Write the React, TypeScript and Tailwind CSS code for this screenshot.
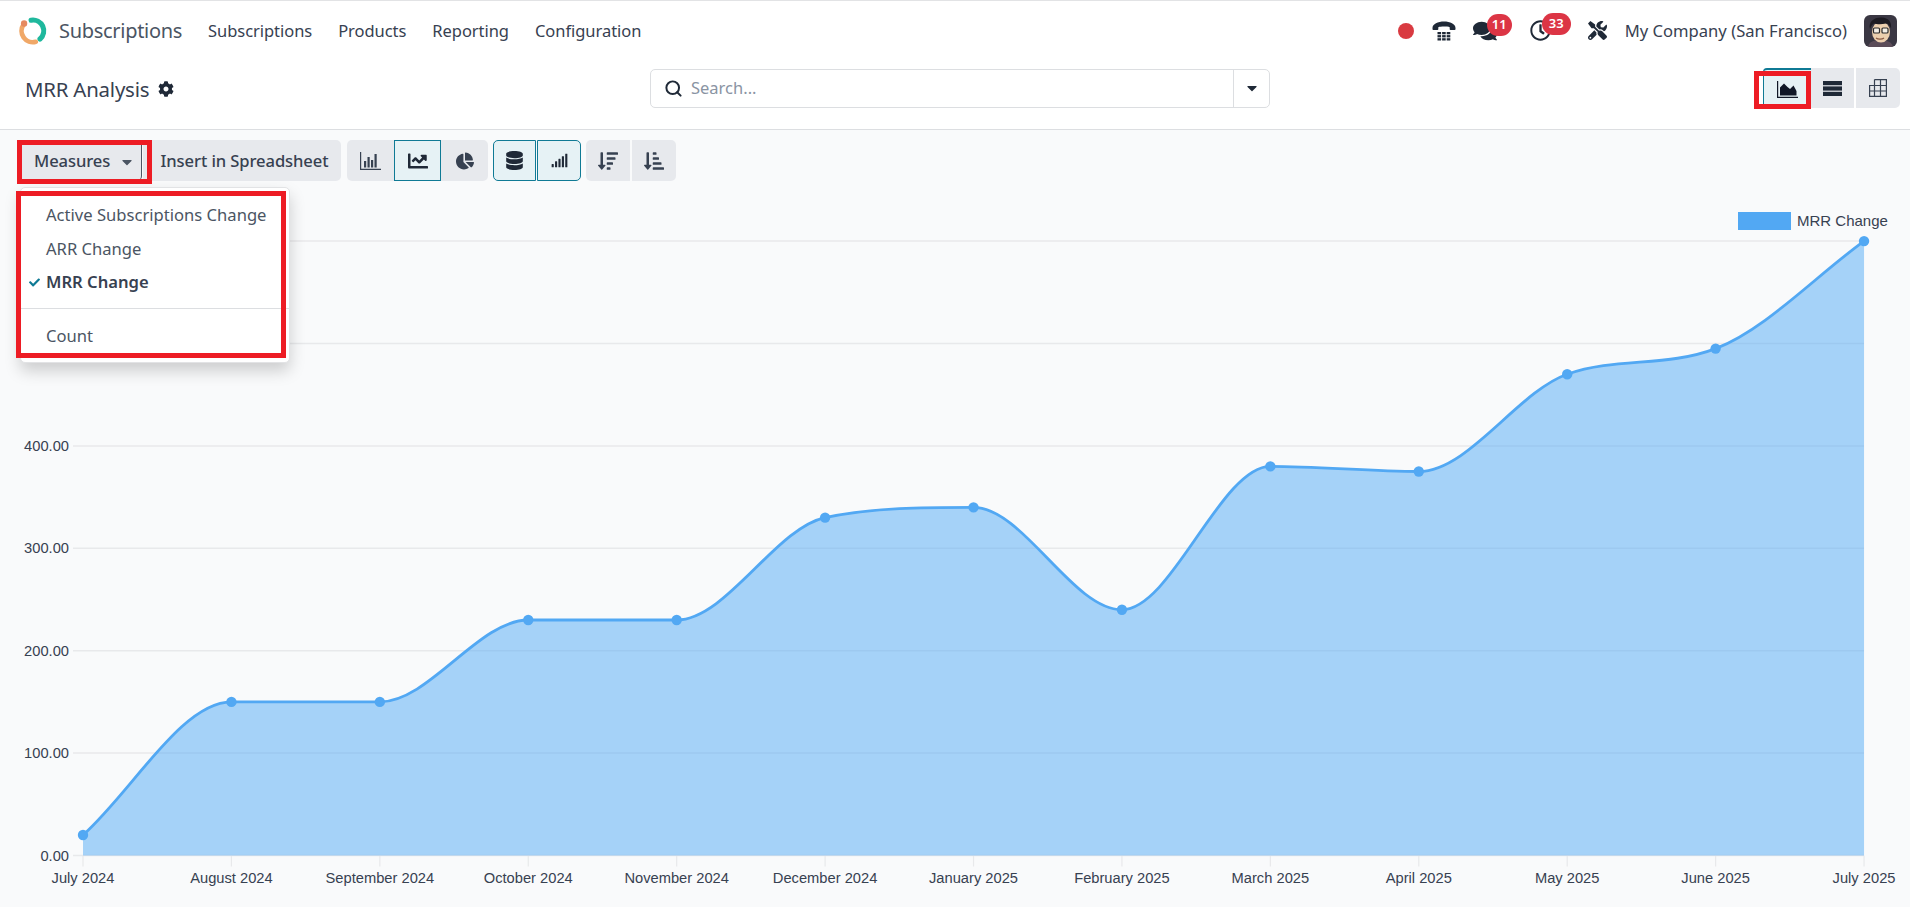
import type { ReactNode } from 'react';
import { Search } from 'lucide-react';
import {
  FaCaretDown,
  FaChartLine,
  FaChartPie,
  FaCheck,
  FaCog,
  FaComments,
  FaDatabase,
  FaRegClock,
  FaSignal,
  FaSortAmountDown,
  FaSortAmountDownAlt,
  FaTools,
} from 'react-icons/fa';

const months = [
  'July 2024',
  'August 2024',
  'September 2024',
  'October 2024',
  'November 2024',
  'December 2024',
  'January 2025',
  'February 2025',
  'March 2025',
  'April 2025',
  'May 2025',
  'June 2025',
  'July 2025',
];
const values = [20, 150, 150, 230, 230, 330, 340, 240, 380, 375, 470, 495, 600];

const X0 = 83;
const STEP = 148.42;
const BASE = 855.5;
const PER_UNIT = 1.024;

const pts = values.map((v, i) => ({ x: X0 + i * STEP, y: BASE - v * PER_UNIT }));

// same monotone interpolation the chart uses
function monotonePath(p: { x: number; y: number }[]) {
  const n = p.length;
  const delta: number[] = [];
  for (let i = 0; i < n - 1; i++) delta.push((p[i + 1].y - p[i].y) / (p[i + 1].x - p[i].x));
  const m: number[] = new Array(n).fill(0);
  m[0] = delta[0];
  m[n - 1] = delta[n - 2];
  for (let i = 1; i < n - 1; i++) {
    m[i] = Math.sign(delta[i - 1]) === Math.sign(delta[i]) ? (delta[i - 1] + delta[i]) / 2 : 0;
  }
  for (let i = 0; i < n - 1; i++) {
    if (delta[i] === 0) {
      m[i] = 0;
      m[i + 1] = 0;
      continue;
    }
    const a = m[i] / delta[i];
    const b = m[i + 1] / delta[i];
    const sq = a * a + b * b;
    if (sq > 9) {
      const tau = 3 / Math.sqrt(sq);
      m[i] = a * tau * delta[i];
      m[i + 1] = b * tau * delta[i];
    }
  }
  let d = `M${p[0].x} ${p[0].y}`;
  for (let i = 0; i < n - 1; i++) {
    const dx = (p[i + 1].x - p[i].x) / 3;
    d += ` C${p[i].x + dx} ${p[i].y + m[i] * dx} ${p[i + 1].x - dx} ${p[i + 1].y - m[i + 1] * dx} ${p[i + 1].x} ${p[i + 1].y}`;
  }
  return d;
}

function Logo() {
  return (
    <svg width="30" height="30" viewBox="0 0 32 32" fill="none" className="shrink-0">
      <path d="M14 4.500 A11.500 11.500 0 0 1 23.500 24.500" stroke="#1fb89d" strokeWidth="5.500" strokeLinecap="round" />
      <path d="M6 9 A12 12 0 0 0 19 27.500" stroke="#f0a868" strokeWidth="5" strokeLinecap="round" />
      <circle cx="6.500" cy="8" r="3.400" fill="#e58a5f" />
    </svg>
  );
}

function PhoneIcon() {
  const keys = [0, 1, 2].flatMap((row) => [0, 1, 2].map((col) => ({ row, col })));
  return (
    <svg width="24" height="20" viewBox="0 0 24 20" fill="#1f2937">
      <path d="M0.500 7C0.500 3 6 0.500 12 0.500S23.500 3 23.500 7v1.200c0 .5-.4.8-.8.8h-4.200c-.5 0-.8-.3-.8-.8V6.200C15.500 5.400 8.500 5.400 6.300 6.200v2c0 .5-.3.8-.8.8H1.300c-.4 0-.8-.3-.8-.8z" />
      {keys.map(({ row, col }) => (
        <rect key={`${row}-${col}`} x={5.500 + col * 4.600} y={11 + row * 3.100} width="3.600" height="2.300" />
      ))}
    </svg>
  );
}

function BarChartIcon() {
  return (
    <svg width="21" height="18" viewBox="0 0 21 18" fill="#374151">
      <path d="M0 0h1.200v16.700H21V18H0z" />
      <rect x="4" y="9" width="2.200" height="6.500" />
      <rect x="7.500" y="5" width="2.200" height="10.500" />
      <rect x="11" y="8" width="2.200" height="7.500" />
      <rect x="14.500" y="2" width="2.200" height="13.500" />
    </svg>
  );
}

function AreaChartIcon() {
  return (
    <svg width="21" height="17" viewBox="0 0 21 17" fill="#111827">
      <path d="M0 0h1.200v15.700H21V17H0z" />
      <path d="M3 14.500V6.500L7 2.500l3.500 3.500 2.500 2 3.500-3.500 3 5.500v4.500z" />
    </svg>
  );
}

function ListIcon() {
  return (
    <svg width="19" height="15" viewBox="0 0 19 15" fill="#1f2937">
      <rect width="19" height="4.200" />
      <rect y="5.400" width="19" height="4.200" />
      <rect y="10.800" width="19" height="4.200" />
    </svg>
  );
}

function TableIcon() {
  return (
    <svg width="18" height="18" viewBox="0 0 18 18" fill="none" stroke="#374151" strokeWidth="1.200">
      <path d="M5.500 .6H17.400V17.400H.6V6.500H17.400M.6 12H17.400M5.500 .6V17.400M11.500 .6V17.400" />
    </svg>
  );
}

function Avatar() {
  return (
    <svg width="33" height="32" viewBox="0 0 33 32" className="rounded-md shrink-0">
      <rect width="33" height="32" fill="#3a3743" />
      <path d="M4 32c1-5 5-7 12-7s12 2 13 7z" fill="#5b4c58" />
      <ellipse cx="17" cy="17" rx="9" ry="10.500" fill="#eccfae" />
      <path d="M6 14C4 7 10 2 18 2.500c6 .4 10 4 9 11-1-3-3-5-5-5-4 1-9 1-12 0-2 1-3 3-4 5.500z" fill="#1d1b22" />
      <rect x="9.500" y="13" width="6" height="5" rx="1" fill="#f5efe6" stroke="#2b2b2b" strokeWidth="1.200" />
      <rect x="18" y="13" width="6" height="5" rx="1" fill="#f5efe6" stroke="#2b2b2b" strokeWidth="1.200" />
      <path d="M12 23c2 1.500 6 1.500 8 0" stroke="#8a5a44" strokeWidth="1.200" fill="none" />
    </svg>
  );
}

function Badge({ children, className }: { children: ReactNode; className: string }) {
  return (
    <span
      className={`absolute h-[22px] rounded-full bg-[#dc3545] text-white text-[13px] font-semibold flex items-center justify-center ${className}`}
    >
      {children}
    </span>
  );
}

function ToolButton({
  children,
  active,
  className = '',
}: {
  children: ReactNode;
  active?: boolean;
  className?: string;
}) {
  return (
    <button
      className={`h-[41px] flex items-center justify-center ${
        active ? 'bg-[#e6f2f5] border border-[#0f7a95]' : 'bg-[#e7e9ed]'
      } ${className}`}
    >
      {children}
    </button>
  );
}

function MeasureItem({ label, checked }: { label: string; checked?: boolean }) {
  return (
    <div className="relative h-[33.500px] pl-[25px] flex items-center text-[16.600px] text-[#4b5563] whitespace-nowrap">
      {checked && <FaCheck size={11} className="absolute left-[8px] top-[11px] text-[#0f7a95]" />}
      <span className={checked ? 'font-semibold text-[#374151]' : ''}>{label}</span>
    </div>
  );
}

function Chart() {
  const line = monotonePath(pts);
  const last = pts[pts.length - 1];
  const area = `${line} L${last.x} ${BASE} L${pts[0].x} ${BASE} Z`;
  return (
    <svg width="1910" height="717" viewBox="0 190 1910 717" className="block">
      {[0, 100, 200, 300, 400, 500, 600].map((v) => {
        const y = BASE - v * PER_UNIT;
        return (
          <g key={v}>
            <line x1="73" x2={last.x} y1={y} y2={y} stroke="#e8e9eb" strokeWidth="1.500" />
            {v <= 400 && (
              <text x="69" y={y + 5} textAnchor="end" fontSize="14.700" fill="#374151" fontFamily="'Liberation Sans', sans-serif">
                {v.toFixed(2)}
              </text>
            )}
          </g>
        );
      })}
      {pts.map((p, i) => (
        <line key={i} x1={p.x} x2={p.x} y1={BASE} y2={BASE + 11} stroke="#e8e9eb" strokeWidth="1.200" />
      ))}
      <path d={area} fill="#52a9f5" fillOpacity="0.5" />
      <path d={line} fill="none" stroke="#52a8f3" strokeWidth="2.800" />
      {pts.map((p, i) => (
        <circle key={i} cx={p.x} cy={p.y} r="5.200" fill="#52a8f3" />
      ))}
      {months.map((m, i) => (
        <text
          key={m}
          x={pts[i].x}
          y="883"
          textAnchor="middle"
          fontSize="14.700"
          fill="#374151"
          fontFamily="'Liberation Sans', sans-serif"
        >
          {m}
        </text>
      ))}
      <rect x="1738" y="212" width="53" height="18" fill="#52a8f3" />
      <text x="1797" y="225.500" fontSize="15" fill="#374151" fontFamily="'Liberation Sans', sans-serif">
        MRR Change
      </text>
    </svg>
  );
}

export default function App() {
  return (
    <div className="relative w-[1910px] h-[907px] overflow-hidden bg-[#f9fafb] font-['Noto_Sans',sans-serif] text-[#374151]">
      <div className="bg-white border-b border-[#dcdee1]">
        {/* top nav */}
        <nav className="h-[60px] border-t border-[#e2e3e5] flex items-center pl-[18px] pr-[13px]">
          <Logo />
          <span className="ml-[11px] mt-[1px] text-[20px] text-[#4b5563] tracking-[-0.3px]">Subscriptions</span>
          <div className="ml-[26px] mt-[1px] flex gap-[26px] text-[16.500px] text-[#374151] tracking-[-0.05px]">
            <span>Subscriptions</span>
            <span>Products</span>
            <span>Reporting</span>
            <span>Configuration</span>
          </div>
          <div className="ml-auto flex items-center">
            <span className="w-[16px] h-[16px] rounded-full bg-[#d93a41]" />
            <span className="ml-[18px]">
              <PhoneIcon />
            </span>
            <span className="relative ml-[16px] w-[26px] flex justify-center">
              <FaComments size={24} className="text-[#1f2937]" />
              <Badge className="-top-[5px] left-[15px] w-[25px]">11</Badge>
            </span>
            <span className="relative ml-[32px] w-[22px] flex justify-center">
              <FaRegClock size={21} className="text-[#1f2937]" />
              <Badge className="-top-[7px] left-[12px] w-[29px]">33</Badge>
            </span>
            <span className="ml-[36px]">
              <FaTools size={19} className="text-[#1f2937]" />
            </span>
            <span className="ml-[18px] mt-[1px] text-[16.600px] text-[#374151] whitespace-nowrap">
              My Company (San Francisco)
            </span>
            <span className="ml-[17px]">
              <Avatar />
            </span>
          </div>
        </nav>

        {/* control panel */}
        <div className="h-[69px] grid grid-cols-[650px_620px_1fr] items-center pb-[13px]">
          <div className="pl-[25px] mt-[2px] flex items-center gap-[9px]">
            <span className="text-[20.400px] text-[#374151] tracking-[-0.2px]">MRR Analysis</span>
            <FaCog size={16} className="text-[#1f2937]" />
          </div>
          <div className="h-[39px] flex border border-[#dcdee1] rounded-[5px] bg-white">
            <div className="flex-1 flex items-center pl-[13px] gap-[8px]">
              <Search size={19} strokeWidth={2.500} className="text-[#1f2937]" />
              <span className="text-[16.500px] text-[#8a94a3]">Search...</span>
            </div>
            <div className="w-[36px] border-l border-[#dcdee1] flex items-center justify-center">
              <FaCaretDown size={16} className="text-[#1f2937]" />
            </div>
          </div>
          <div className="flex justify-end pr-[10px]">
            <div className="flex">
              <div className="w-[48px] h-[40px] bg-[#e6f2f5] border-t-2 border-l border-[#0f7a95] rounded-tl-[4px] flex items-center justify-center">
                <AreaChartIcon />
              </div>
              <div className="w-[43px] h-[40px] bg-[#e7e9ed] flex items-center justify-center">
                <ListIcon />
              </div>
              <div className="ml-[2px] w-[44px] h-[40px] bg-[#e7e9ed] rounded-r-[5px] flex items-center justify-center">
                <TableIcon />
              </div>
            </div>
          </div>
        </div>
      </div>

      {/* toolbar */}
      <div className="h-[60px] pt-[10px] pl-[20px] flex text-[16.600px] font-medium text-[#374151] tracking-[-0.1px]">
        <ToolButton className="w-[122px] rounded-l-[5px] border-r border-[#4b5563] rounded-br-[5px] justify-start pl-[14px] pt-[2px] gap-[9px]">
          <span>Measures</span>
          <FaCaretDown size={16} className="text-[#4b5563]" />
        </ToolButton>
        <ToolButton className="ml-[1px] w-[198px] rounded-r-[5px] whitespace-nowrap pl-[5px] pt-[2px]">
          Insert in Spreadsheet
        </ToolButton>
        <div className="ml-[6px] flex">
          <ToolButton className="w-[47px] rounded-l-[5px]">
            <BarChartIcon />
          </ToolButton>
          <ToolButton active className="w-[47px]">
            <FaChartLine size={20} className="text-[#1f2937]" />
          </ToolButton>
          <ToolButton className="w-[47px] rounded-r-[5px]">
            <FaChartPie size={18} className="text-[#374151]" />
          </ToolButton>
        </div>
        <div className="ml-[5px] flex gap-[1px]">
          <ToolButton active className="w-[43px] rounded-l-[5px]">
            <FaDatabase size={19} className="text-[#1f2937]" />
          </ToolButton>
          <ToolButton active className="w-[44px] rounded-r-[5px]">
            <FaSignal size={17} className="text-[#1f2937]" />
          </ToolButton>
        </div>
        <div className="ml-[5px] flex gap-[2px]">
          <ToolButton className="w-[44px] rounded-l-[5px]">
            <FaSortAmountDown size={20} className="text-[#374151]" />
          </ToolButton>
          <ToolButton className="w-[44px] rounded-r-[5px]">
            <FaSortAmountDownAlt size={20} className="text-[#374151]" />
          </ToolButton>
        </div>
      </div>

      <Chart />

      {/* measures menu */}
      <div className="absolute left-[20px] top-[187px] w-[270px] h-[176px] bg-white border border-[#e2e3e5] rounded-[5px] shadow-[0_8px_16px_rgba(0,0,0,0.18)] pt-[11px]">
        <MeasureItem label="Active Subscriptions Change" />
        <MeasureItem label="ARR Change" />
        <MeasureItem checked label="MRR Change" />
        <div className="mt-[8px] mb-[11px] border-t border-[#dcdee1]" />
        <MeasureItem label="Count" />
      </div>

      {/* red annotation frames */}
      <div className="absolute left-[17px] top-[140px] w-[135px] h-[44px] border-[5px] border-[#ed1c24]" />
      <div className="absolute left-[16px] top-[191px] w-[270px] h-[167px] border-[5px] border-[#ed1c24]" />
      <div className="absolute left-[1754px] top-[71px] w-[57px] h-[38px] border-[5px] border-[#ed1c24]" />
    </div>
  );
}
